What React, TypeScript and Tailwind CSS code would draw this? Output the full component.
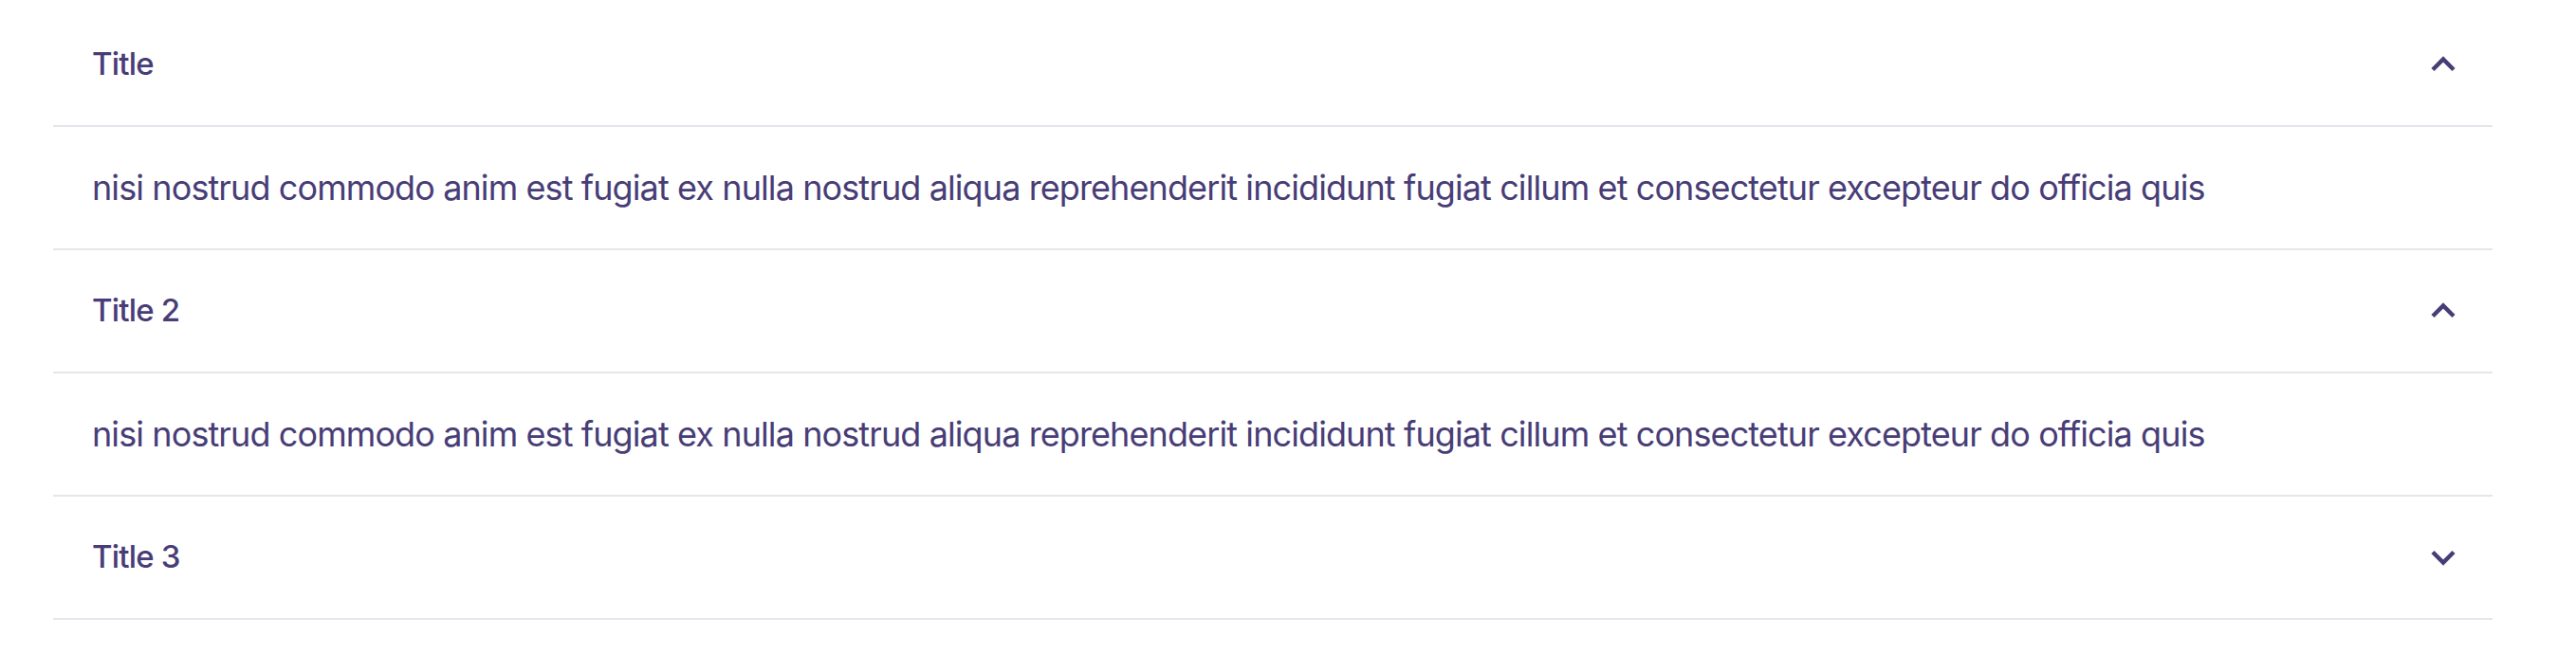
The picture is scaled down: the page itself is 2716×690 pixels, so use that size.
import { useState } from 'react';

const BODY =
  'nisi nostrud commodo anim est fugiat ex nulla nostrud aliqua reprehenderit incididunt fugiat cillum et consectetur excepteur do officia quis';

const ITEMS = [
  { title: 'Title', body: BODY, open: true },
  { title: 'Title 2', body: BODY, open: true },
  { title: 'Title 3', body: BODY, open: false },
];

function Chevron({ up }: { up: boolean }) {
  return (
    <svg width="30" height="20" viewBox="0 0 30 20" fill="none" className="shrink-0">
      <polyline
        points={up ? '4,15.5 15,4.5 26,15.5' : '4,4.5 15,15.5 26,4.5'}
        stroke="#483d77"
        strokeWidth="4.5"
        strokeLinejoin="miter"
      />
    </svg>
  );
}

export default function App() {
  const [open, setOpen] = useState(ITEMS.map(i => i.open));

  return (
    <div className="min-h-screen bg-white pt-[4px]" style={{ fontFamily: 'Inter, "Noto Sans", sans-serif' }}>
      <div className="ml-[56px] w-[2572px] text-[#483d77]">
        {ITEMS.map((item, i) => (
          <div key={item.title}>
            <button
              className="flex h-[130px] w-full items-center justify-between border-b-2 border-[#e6e5ec] pl-[41px] pr-[37px] text-left"
              onClick={() => setOpen(o => o.map((v, j) => (j === i ? !v : v)))}
            >
              <span className="text-[33px] font-medium tracking-[-0.8px]">{item.title}</span>
              <Chevron up={open[i]} />
            </button>
            {open[i] && (
              <div className="flex h-[130px] items-center border-b-2 border-[#e6e5ec] pl-[41px] pr-[37px]">
                <p className="text-[36px] tracking-[-0.9px]">{item.body}</p>
              </div>
            )}
          </div>
        ))}
      </div>
    </div>
  );
}
